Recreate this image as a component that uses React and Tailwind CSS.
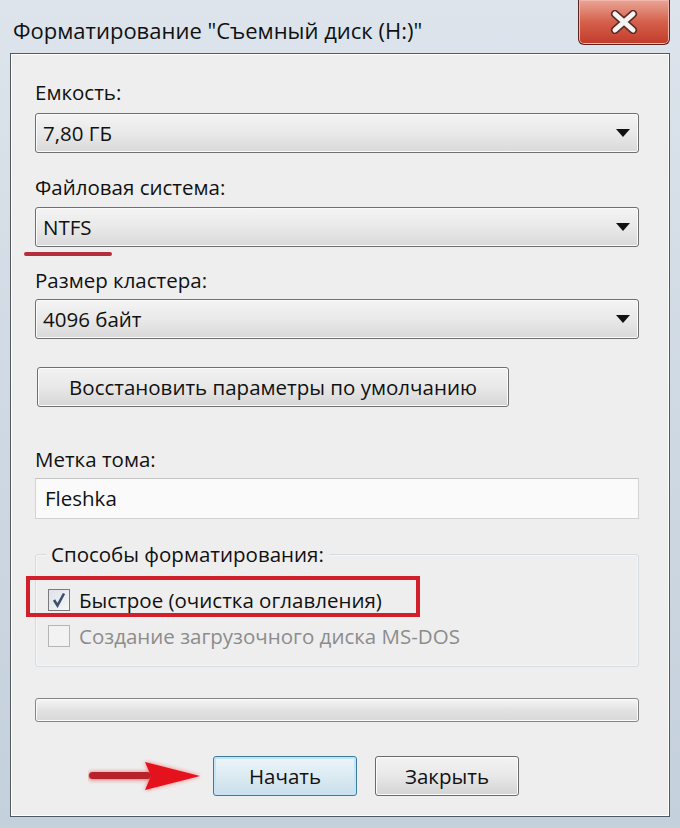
import React from 'react';

const font = { fontFamily: '"Open Sans", "Noto Sans", sans-serif' };

const Arrow = () => (
    <svg width="14" height="8" viewBox="0 0 14 8">
        <path d="M0 0 L14 0 L7 8 Z" fill="#111" />
    </svg>
);

const Combo = ({ value }) => (
    <div className="h-[40px] w-[604px] rounded-[3px] border border-[#6f6f6f] bg-gradient-to-b from-[#f4f4f4] via-[#e9e9e9] to-[#d9d9d9] shadow-[inset_0_0_0_1px_#fbfbfb] flex items-center justify-between pl-[7px] pr-[8px]">
        <span className="text-[20.5px] text-[#111]">{value}</span>
        <Arrow />
    </div>
);

const Label = ({ children, className = '' }) => (
    <div className={`h-[28px] leading-[28px] text-[20.5px] text-[#111] ${className}`}>{children}</div>
);

const CheckBox = ({ checked, disabled }) => (
    <div className={`w-[22px] h-[22px] border ${disabled ? 'border-[#b5b5b5] bg-[#f2f2f2]' : 'border-[#7b7b7b] bg-gradient-to-br from-[#dde3ea] to-[#f5f6f7]'} flex items-center justify-center`}>
        {checked && (
            <svg width="16" height="16" viewBox="0 0 16 16">
                <path d="M3 8 L6.5 13.5 L13 1.5" fill="none" stroke="#3d4f6b" strokeWidth="2.6" />
            </svg>
        )}
    </div>
);

const RedArrow = () => (
    <svg width="116" height="34" viewBox="0 0 116 34" className="mr-[9px]">
        <defs>
            <filter id="glow" x="-20%" y="-50%" width="140%" height="200%">
                <feGaussianBlur stdDeviation="2" />
            </filter>
        </defs>
        <g filter="url(#glow)" opacity="0.6">
            <rect x="0" y="13" width="64" height="8" rx="4" fill="#e02020" />
            <path d="M57 3 L112 17 L57 31 L63 17 Z" fill="#ff2020" />
        </g>
        <rect x="1" y="13" width="62" height="7" rx="3.5" fill="#b8232b" />
        <path d="M57 3 L112 17 L57 31 L63 17 Z" fill="#e3121c" />
    </svg>
);

export default function App() {
    return (
        <div className="w-[680px] h-[828px] bg-gradient-to-b from-[#dde4ec] via-[#cfd9e3] to-[#c4d0dc] flex flex-col overflow-hidden" style={font}>
            {/* title bar */}
            <div className="h-[53px] flex items-start justify-between pl-[13px] pr-[10px]">
                <div className="pt-[14px] text-[22px] leading-[32px] text-[#111]">
                    Форматирование "Съемный диск (H:)"
                </div>
                <div className="w-[92px] h-[45px] rounded-b-[6px] border border-t-0 border-[#5a2420] bg-gradient-to-b from-[#e9a596] via-[#d4604c] to-[#c23a28] shadow-[inset_0_0_0_1px_#f2b7aa] flex items-center justify-center">
                    <svg width="30" height="24" viewBox="0 0 30 24">
                        <path d="M6 4 L24 20 M24 4 L6 20" stroke="#5a2a26" strokeWidth="8" strokeLinecap="round" />
                        <path d="M6 4 L24 20 M24 4 L6 20" stroke="#f7f3f2" strokeWidth="5" strokeLinecap="round" />
                    </svg>
                </div>
            </div>

            {/* panel */}
            <div className="mx-[10px] h-[764px] border border-[#4f5a64] bg-[#eeeeee] shadow-[inset_0_0_0_1px_#ffffff] flex flex-col pl-[24px] pt-[24px]">
                <Label>Емкость:</Label>
                <div className="mt-[7px]"><Combo value="7,80 ГБ" /></div>

                <Label className="mt-[20px]">Файловая система:</Label>
                <div className="mt-[6px]"><Combo value="NTFS" /></div>
                <div className="mt-[5px] -ml-[11px] w-[88px] h-[4px] rounded-full bg-[#b32e3a] blur-[0.5px]" />

                <Label className="mt-[10px]">Размер кластера:</Label>
                <div className="mt-[5px]"><Combo value="4096 байт" /></div>

                <div className="mt-[28px] ml-[2px] w-[472px] h-[40px] rounded-[3px] border border-[#707070] bg-gradient-to-b from-[#f2f2f2] via-[#e8e8e8] to-[#d6d6d6] shadow-[inset_0_0_0_1px_#fcfcfc] flex items-center justify-center text-[20.5px] text-[#111]">
                    Восстановить параметры по умолчанию
                </div>

                <Label className="mt-[38px]">Метка тома:</Label>
                <div className="mt-[5px] w-[604px] h-[41px] border border-[#d3d3d3] border-t-[#c4c4c4] bg-[#fafafa] flex items-center pl-[9px] text-[20.5px] text-[#111]">
                    Fleshka
                </div>

                {/* group box */}
                <div className="relative mt-[35px] w-[604px] h-[113px] rounded-[3px] border border-[#d4dce2] shadow-[inset_0_0_0_1px_#f6f6f6]">
                    <div className="absolute -top-[15px] left-[10px] px-[5px] bg-[#eeeeee] h-[28px] leading-[28px] text-[20.5px] text-[#111]">
                        Способы форматирования:
                    </div>
                    <div className="pt-[33px] pl-[12px] flex flex-col gap-[13px]">
                        <div className="relative flex items-center gap-[9px] h-[23px]">
                            <div className="absolute -left-[22px] -top-[12px] w-[394px] h-[41px] border-[4px] border-[#d11f2b]" />
                            <CheckBox checked />
                            <span className="text-[20.5px] text-[#111] leading-[28px]">Быстрое (очистка оглавления)</span>
                        </div>
                        <div className="flex items-center gap-[9px] h-[23px]">
                            <CheckBox disabled />
                            <span className="text-[20.5px] text-[#8c8c8c] leading-[28px]">Создание загрузочного диска MS-DOS</span>
                        </div>
                    </div>
                </div>

                {/* progress */}
                <div className="mt-[31px] w-[604px] h-[24px] rounded-[3px] border border-[#858585] bg-gradient-to-b from-[#f6f6f6] via-[#e2e2e2] to-[#d8d8d8] shadow-[inset_0_0_0_1px_#fafafa]" />

                {/* buttons */}
                <div className="mt-[34px] flex items-center pl-[53px]">
                    <RedArrow />
                    <div className="w-[144px] h-[40px] rounded-[3px] border border-[#3d7a9e] bg-gradient-to-b from-[#ecf5fa] via-[#dcebf3] to-[#c9dde9] shadow-[inset_0_0_0_2px_#c2e6f8] flex items-center justify-center text-[20.5px] text-[#111]">
                        Начать
                    </div>
                    <div className="ml-[18px] w-[144px] h-[40px] rounded-[3px] border border-[#6a6a6a] bg-gradient-to-b from-[#f3f3f3] via-[#e8e8e8] to-[#d3d3d3] shadow-[inset_0_0_0_1px_#fcfcfc] flex items-center justify-center text-[20.5px] text-[#111]">
                        Закрыть
                    </div>
                </div>
            </div>
        </div>
    );
}
